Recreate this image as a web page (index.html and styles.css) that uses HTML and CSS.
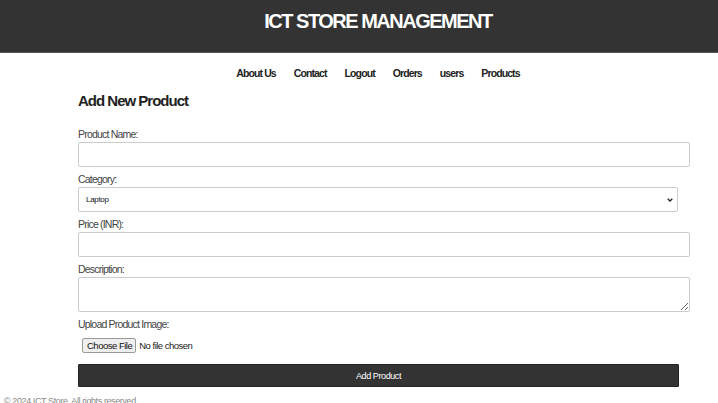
FILE: index.html
```html
<!DOCTYPE html>
<html>
<head>
<meta charset="utf-8">
<title>Add Product</title>
<link rel="stylesheet" href="styles.css">
</head>
<body>
<div class="page">
  <header class="site-header">
    <h1>ICT STORE MANAGEMENT</h1>
  </header>
  <nav class="site-nav">
    <a href="#">About Us</a>
    <a href="#">Contact</a>
    <a href="#">Logout</a>
    <a href="#">Orders</a>
    <a href="#">users</a>
    <a href="#">Products</a>
  </nav>
  <main class="container">
    <h2>Add New Product</h2>
    <form class="product-form">
      <label>Product Name:</label>
      <input type="text" class="field">
      <label>Category:</label>
      <div class="select-wrap">
        <select class="field-select">
          <option>Laptop</option>
        </select>
        <svg class="chevron" width="6" height="4" viewBox="0 0 6 4"><path d="M0.7 0.7 L3 3 L5.3 0.7" fill="none" stroke="#222" stroke-width="1.3"/></svg>
      </div>
      <label>Price (INR):</label>
      <input type="text" class="field">
      <label>Description:</label>
      <textarea class="field area"></textarea>
      <label>Upload Product Image:</label>
      <div class="file-row">
        <span class="file-btn">Choose File</span>
        <span class="file-text">No file chosen</span>
      </div>
      <button type="button" class="submit">Add Product</button>
    </form>
  </main>
  <footer class="site-footer">© 2024 ICT Store. All rights reserved.</footer>
</div>
</body>
</html>
```
FILE: styles.css
```css
html, body {
  margin: 0;
  padding: 0;
  background: #fff;
  overflow: hidden;
}
body {
  font-family: "Liberation Sans", Arial, sans-serif;
  color: #333;
}
.page {
  width: 756px;
}
.site-header {
  background: #333;
  height: 53px;
  border-bottom: 1px solid #555;
  box-sizing: border-box;
  display: flex;
  justify-content: center;
}
.site-header h1 {
  margin: 0;
  padding-top: 10px;
  color: #fff;
  font-size: 20px;
  letter-spacing: -1.5px;
  font-weight: bold;
  line-height: 22px;
}
.site-nav {
  display: flex;
  justify-content: center;
  gap: 18px;
  padding-top: 13px;
  height: 20px;
}
.site-nav a {
  color: #222;
  text-decoration: none;
  font-weight: bold;
  font-size: 10.5px;
  letter-spacing: -0.9px;
  line-height: 14px;
}
.container {
  width: 600px;
  margin: 0 auto;
}
.container h2 {
  margin: 0;
  padding-top: 5px;
  font-size: 15px;
  letter-spacing: -1px;
  line-height: 20px;
  color: #222;
}
.product-form {
  display: flex;
  flex-direction: column;
  align-items: flex-start;
  padding-top: 11px;
}
.product-form label {
  font-size: 10.5px;
  letter-spacing: -0.8px;
  line-height: 13px;
  color: #444;
  margin-top: 6px;
  margin-bottom: 1px;
}
.field {
  width: 600px;
  box-sizing: content-box;
  padding: 0 5px;
  margin: 0;
  border: 1px solid #ccc;
  border-radius: 2px;
  height: 23px;
  font-family: inherit;
}
.area {
  height: 33px;
  resize: vertical;
}
.select-wrap {
  position: relative;
  width: 600px;
  height: 25px;
}
.field-select {
  -webkit-appearance: none;
  appearance: none;
  width: 600px;
  height: 25px;
  margin: 0;
  border: 1px solid #ccc;
  border-radius: 2px;
  font-size: 8px;
  letter-spacing: -0.3px;
  padding: 0 7px;
  background: #fff;
  color: #111;
  font-family: "Liberation Sans", Arial, sans-serif;
}
.chevron {
  position: absolute;
  right: 5px;
  top: 11px;
}
.file-row {
  display: flex;
  align-items: center;
  gap: 3px;
  margin: 5px 0 0 4px;
  height: 16px;
}
.file-btn {
  font-size: 9.5px;
  letter-spacing: -0.5px;
  line-height: 13px;
  padding: 0 3px 0 4px;
  border: 1px solid #999;
  border-radius: 2px;
  background: #efefef;
  color: #111;
}
.file-text {
  font-size: 9.5px;
  letter-spacing: -0.5px;
  color: #222;
}
.submit {
  margin-top: 11px;
  width: 601px;
  height: 23px;
  background: #333;
  color: #fff;
  border: 1px solid #222;
  border-radius: 1px;
  font-size: 9px;
  letter-spacing: -0.4px;
  font-family: inherit;
  padding: 0;
}
.site-footer {
  margin-top: 9px;
  padding-left: 4px;
  font-size: 9px;
  letter-spacing: -0.4px;
  color: #888;
}
```
